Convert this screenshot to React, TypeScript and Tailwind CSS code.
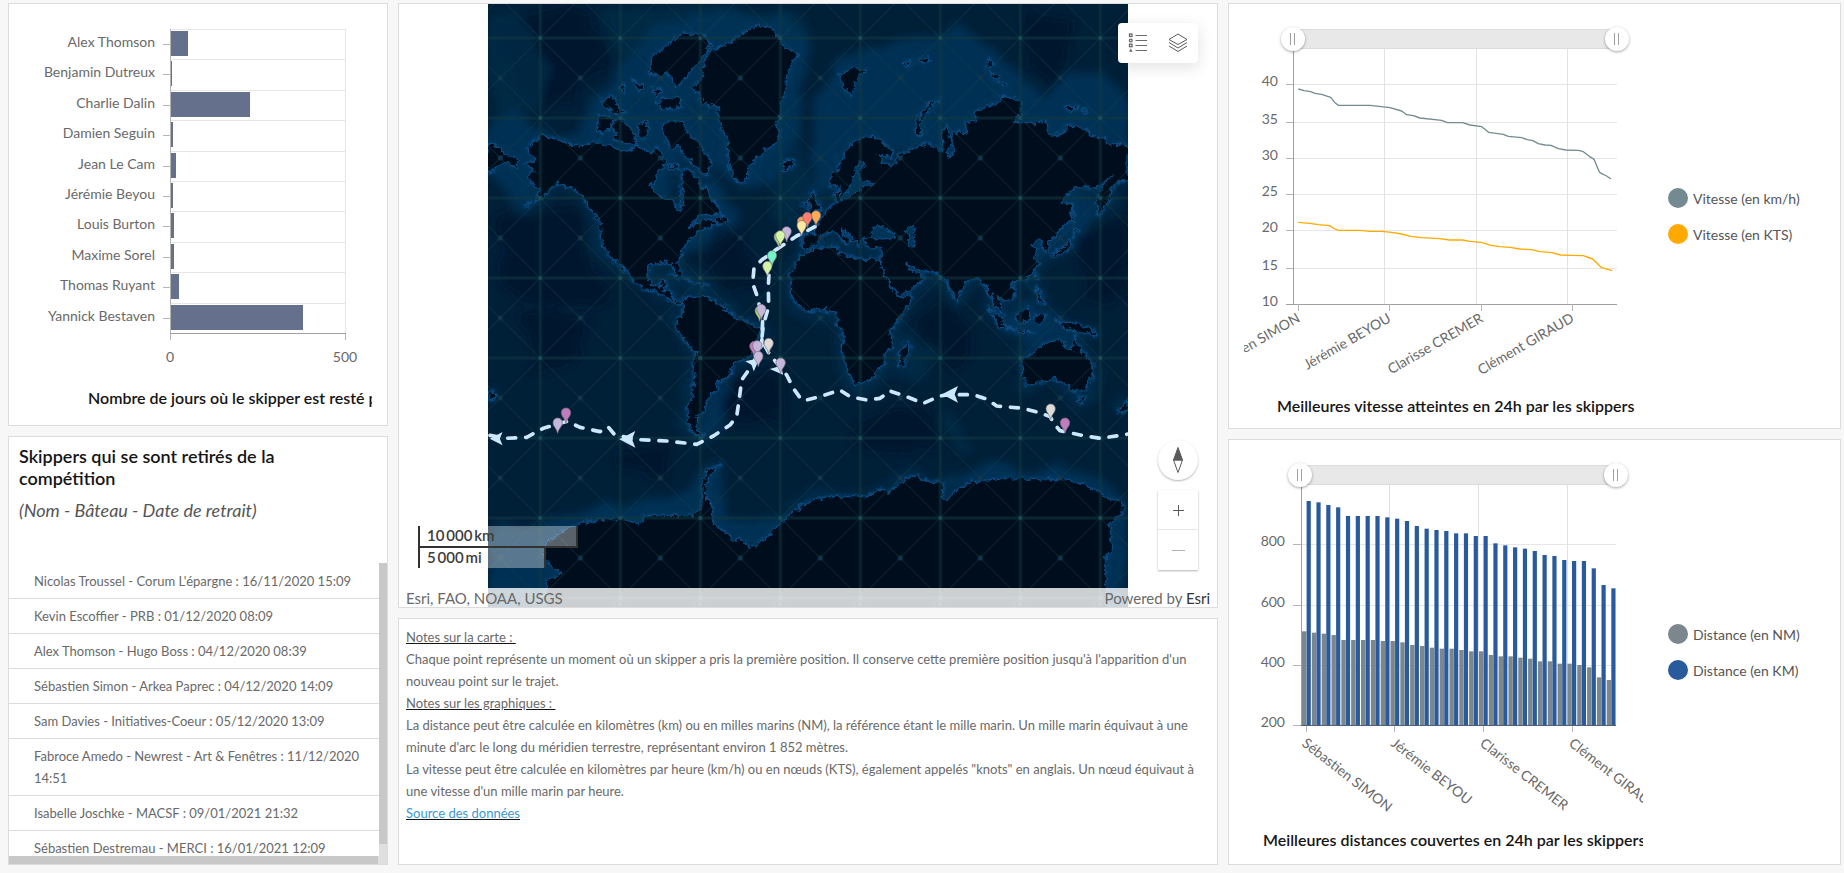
import { useId } from "react";
import type { ReactNode } from "react";

const LABEL = "fill-[#696969] text-[14px]";
const CHART_TITLE = "fill-[#151515] text-[16px] font-semibold";

/* ------------------------------------------------------------------ */
/* Days in the lead                                                    */
/* ------------------------------------------------------------------ */

const LEADERS = [
  { name: "Alex Thomson", width: 17 },
  { name: "Benjamin Dutreux", width: 1 },
  { name: "Charlie Dalin", width: 79 },
  { name: "Damien Seguin", width: 2 },
  { name: "Jean Le Cam", width: 5 },
  { name: "Jérémie Beyou", width: 2 },
  { name: "Louis Burton", width: 3 },
  { name: "Maxime Sorel", width: 3 },
  { name: "Thomas Ruyant", width: 8 },
  { name: "Yannick Bestaven", width: 132 },
];

function LeadersChart() {
  const rowTop = (i: number) => Math.round(29 + i * 30.4);
  return (
    <svg viewBox="9 4 378 421" className="h-full w-full" role="img" aria-label="Nombre de jours en tête">
      <clipPath id="leaders-clip">
        <rect x="24" y="4" width="348" height="421" />
      </clipPath>
      <g shapeRendering="crispEdges">
        {LEADERS.map((row, i) => (
          <g key={row.name}>
            <rect x="171" y={rowTop(i)} width="175" height="1" fill="#e6e6e6" />
            <rect x="163" y={rowTop(i) + 15} width="8" height="1" fill="#b5b5b5" />
          </g>
        ))}
        <rect x="345" y="29" width="1" height="304" fill="#e6e6e6" />
        <rect x="170" y="29" width="1" height="311" fill="#b5b5b5" />
        <rect x="345" y="333" width="1" height="7" fill="#b5b5b5" />
        <rect x="170" y="333" width="176" height="1" fill="#a0a0a0" />
        {LEADERS.map((row, i) => (
          <rect key={row.name} x="171" y={rowTop(i) + 2} width={row.width} height="25" fill="#64708c" />
        ))}
      </g>
      {LEADERS.map((row, i) => (
        <text key={row.name} x="155" y={rowTop(i) + 18} textAnchor="end" className={LABEL}>
          {row.name}
        </text>
      ))}
      <text x="170" y="362" textAnchor="middle" className={LABEL}>0</text>
      <text x="345" y="362" textAnchor="middle" className={LABEL}>500</text>
      <g clipPath="url(#leaders-clip)">
        <text x="88" y="404" className={CHART_TITLE}>
          Nombre de jours où le skipper est resté premier
        </text>
      </g>
    </svg>
  );
}

/* ------------------------------------------------------------------ */
/* Withdrawals list                                                    */
/* ------------------------------------------------------------------ */

const WITHDRAWALS = [
  "Nicolas Troussel - Corum L'épargne : 16/11/2020 15:09",
  "Kevin Escoffier - PRB : 01/12/2020 08:09",
  "Alex Thomson - Hugo Boss : 04/12/2020 08:39",
  "Sébastien Simon - Arkea Paprec : 04/12/2020 14:09",
  "Sam Davies - Initiatives-Coeur : 05/12/2020 13:09",
  "Fabroce Amedo - Newrest - Art & Fenêtres : 11/12/2020 14:51",
  "Isabelle Joschke - MACSF : 09/01/2021 21:32",
  "Sébastien Destremau - MERCI : 16/01/2021 12:09",
];

function Withdrawals() {
  return (
    <div className="flex h-full flex-col">
      <header className="h-[126px] shrink-0 px-[10px] pt-2">
        <h2 className="w-[300px] text-[18px] leading-[22px] font-semibold text-[#151515]">
          Skippers qui se sont retirés de la compétition
        </h2>
        <p className="mt-[10px] text-[18px] leading-[22px] text-[#555555] italic">
          (Nom - Bâteau - Date de retrait)
        </p>
      </header>
      <div className="flex min-h-0 grow">
        <ul className="grow overflow-hidden pt-px">
          {WITHDRAWALS.map((entry) => (
            <li
              key={entry}
              className="border-b border-[#dcdcdc] py-[6px] pr-[12px] pl-[25px] text-[13px] leading-[22px] text-[#696969]"
            >
              {entry}
            </li>
          ))}
        </ul>
        <div className="w-2 shrink-0 bg-[#dfdfdf]">
          <div className="h-[96%] bg-[#c8c8c8]" />
        </div>
      </div>
      <div className="h-2 shrink-0 bg-[#dfdfdf]">
        <div className="mr-[9px] h-full bg-[#c8c8c8]" />
      </div>
    </div>
  );
}

/* ------------------------------------------------------------------ */
/* World map                                                           */
/* ------------------------------------------------------------------ */

const LAND_WEST = [
  // Chukotka and Alaska / North America
  "24,425 45,432 62,448 90,468 118,482 105,502 90,490 70,485 55,492 45,505 24,520",
  "140,445 160,425 185,408 225,415 262,428 300,442 332,428 360,430 395,440 440,458 470,440 500,452 515,462 530,440 548,470 562,492 530,515 515,555 525,580 560,598 582,605 590,630 600,632 612,600 605,560 608,508 628,510 650,535 665,568 680,560 690,590 715,618 722,642 700,645 662,645 640,665 626,684 660,662 690,660 718,668 690,682 650,698 628,720 610,742 606,765 590,785 600,805 606,830 598,836 586,815 574,790 545,785 508,795 500,830 512,850 538,860 545,842 558,845 550,866 574,876 580,896 605,906 600,914 575,902 555,888 520,872 490,865 460,845 452,825 432,800 412,780 440,815 428,812 405,785 385,765 365,722 360,665 330,622 300,580 272,562 235,550 215,558 190,590 160,606 130,618 170,592 182,568 150,548 140,525 165,515 138,490 165,480 150,460",
  // Greenland
  "690,150 730,138 770,112 800,95 830,75 870,82 890,100 900,125 930,150 955,162 935,190 920,230 918,260 905,300 902,340 885,370 900,395 895,425 850,455 812,490 796,545 780,550 760,530 745,480 745,430 725,380 710,320 665,308 660,282 635,262 668,235 670,200",
  // Canadian Arctic
  "510,190 525,160 545,150 560,140 590,110 620,98 670,105 692,130 672,165 640,200 612,240 590,262 575,240 560,215 545,235 530,222 512,226",
  "528,308 560,330 600,322 604,300 590,292 550,296",
  "385,372 410,358 440,368 462,398 470,432 440,428 400,418 412,398",
  "355,350 380,346 402,368 368,402 352,388",
  "366,304 392,286 408,300 416,324 442,338 400,338 372,318",
  "545,375 575,362 610,368 622,400 655,430 690,478 684,528 668,520 640,492 612,468 602,440 572,442 550,402",
  "476,372 500,362 506,400 488,418 474,400",
  "458,238 492,262 476,276",
  "416,262 434,252 430,280",
  "512,262 545,270 530,292",
  "560,492 585,498 600,510 570,506",
  // Iceland, Newfoundland, Caribbean
  "905,490 925,482 940,478 946,494 916,513",
  "705,656 728,645 742,664 715,670",
  "572,822 605,826 636,845 606,838",
  "648,850 682,854 668,862",
  // South America
  "605,908 620,896 660,890 695,898 715,912 745,925 730,930 770,955 820,975 840,990 836,1010 820,1035 818,1058 800,1076 766,1088 745,1130 712,1150 716,1165 696,1176 676,1208 668,1240 654,1246 650,1285 672,1308 648,1306 626,1280 622,1230 636,1190 640,1150 646,1055 618,1026 590,980 592,958 605,945 612,918",
];

const LAND_EAST = [
  // Africa
  "990,752 1022,742 1068,738 1074,760 1110,768 1150,780 1180,774 1198,784 1214,826 1232,862 1254,892 1290,884 1294,902 1260,950 1230,998 1240,1040 1212,1064 1210,1092 1172,1140 1126,1152 1106,1118 1086,1050 1090,1000 1070,962 1070,940 1030,928 985,936 960,920 935,888 932,822 960,772",
  "1284,1024 1290,1045 1276,1090 1256,1096 1256,1058",
  // Eurasia
  "967,702 1004,700 1002,686 1020,662 1045,626 1070,606 1064,580 1080,562 1084,596 1070,560 1050,562 1054,530 1080,498 1100,450 1124,425 1164,408 1200,420 1236,452 1234,474 1194,464 1208,490 1236,500 1260,465 1310,440 1345,430 1386,452 1384,396 1400,376 1412,420 1402,474 1424,458 1414,400 1440,396 1462,405 1454,370 1490,360 1484,340 1520,318 1560,310 1565,285 1590,290 1622,304 1622,340 1600,366 1675,370 1695,360 1710,405 1750,400 1760,375 1810,385 1840,410 1870,414 1880,430 1944,436 1944,540 1920,545 1890,568 1886,600 1854,652 1852,594 1868,560 1894,530 1850,564 1785,560 1745,604 1776,614 1770,660 1730,700 1706,728 1708,758 1692,752 1680,720 1652,732 1672,750 1664,772 1676,792 1658,818 1640,836 1612,842 1592,850 1602,870 1598,896 1574,906 1555,884 1560,920 1570,943 1550,930 1538,900 1520,866 1496,832 1462,846 1442,874 1430,908 1408,858 1392,836 1374,818 1320,812 1284,790 1288,812 1316,818 1334,834 1294,868 1256,886 1224,842 1202,798 1200,774 1208,746 1176,742 1158,736 1152,718 1170,710 1142,716 1138,740 1120,718 1086,684 1084,694 1110,720 1100,734 1078,708 1062,692 1032,702 1014,728 986,746 966,740",
  // British Isles
  "986,600 1000,572 1010,600 1025,630 990,640",
  "970,612 985,604 982,626",
  // Arctic islands
  "1385,295 1345,312 1318,348 1305,390 1312,406 1326,400 1322,362 1352,322",
  "1078,226 1110,205 1160,208 1130,240 1112,292 1094,262",
  "1528,172 1542,196 1518,200",
  "1524,212 1556,226 1550,244",
  "1558,240 1582,256 1568,262",
  "1270,190 1292,184 1288,200",
  "1320,176 1344,170 1350,184 1330,194",
  "1754,318 1796,320 1774,336",
  "1806,328 1824,334 1812,337",
  // Japan, Sakhalin, Taiwan, Philippines
  "1779,684 1796,694 1776,704",
  "1780,708 1774,744 1722,768 1712,762 1750,742",
  "1779,612 1786,668 1778,664",
  "1664,820 1672,836 1664,840",
  "1668,858 1680,880 1692,912 1676,906",
  // Indonesia and New Guinea
  "1522,922 1560,950 1584,990 1560,980",
  "1606,950 1644,920 1652,960 1612,968",
  "1582,984 1640,992 1664,998 1620,998",
  "1664,946 1700,942 1680,976 1666,968",
  "1728,960 1792,974 1830,986 1852,1006 1792,996 1750,982",
  // Australia, Tasmania, New Zealand
  "1625,1080 1660,1060 1695,1030 1735,1020 1760,1045 1776,1050 1786,1004 1800,1045 1840,1095 1836,1130 1816,1172 1780,1174 1760,1150 1720,1135 1670,1150 1640,1156 1628,1116",
  "1795,1190 1813,1190 1805,1212",
  "1944,1200 1914,1232 1930,1236 1944,1222",
  "24,1180 44,1172 50,1190 30,1200",
];

const ANTARCTICA =
  "195,1830 200,1740 245,1720 210,1695 190,1660 200,1630 240,1600 290,1572 370,1560 420,1555 480,1572 492,1548 580,1545 640,1548 665,1520 666,1460 680,1415 720,1390 682,1440 676,1480 696,1520 700,1570 760,1620 790,1620 806,1640 830,1640 890,1580 960,1520 990,1502 1050,1490 1160,1490 1200,1468 1225,1480 1260,1450 1305,1425 1340,1445 1390,1450 1386,1490 1400,1505 1430,1470 1480,1445 1560,1435 1660,1438 1750,1435 1810,1455 1880,1490 1930,1512 1925,1540 1890,1570 1894,1650 1876,1670 1882,1830";

const INLAND_WATER = [
  "1170,700 1176,682 1206,680 1245,704 1240,716 1172,716",
  "1280,682 1306,674 1298,700 1306,740 1290,742 1286,712",
  "1140,486 1156,490 1136,516 1142,542 1186,550 1140,566 1110,592 1078,606 1110,560 1126,512",
  "600,620 604,560 612,560 610,620",
];

const SHELF = [
  "24,360 100,330 180,400 300,400 340,330 400,240 460,130 560,60 680,50 760,30 900,40 980,130 960,330 900,520 800,560 700,480 600,460 540,620 500,560 380,480 180,480 160,600 90,610 24,520",
  "1000,300 1080,180 1240,120 1420,90 1560,130 1620,240 1700,290 1780,220 1880,220 1944,300 1944,440 1600,400 1400,480 1180,430 1060,520 1000,600",
  "560,620 620,760 720,680 760,700 780,640 700,560",
  "1560,860 1700,760 1800,700 1880,600 1740,560 1640,800",
  "1540,960 1640,900 1780,1020 1700,1060 1560,990",
  "660,1310 700,1180 760,1130 720,1290",
  "24,1570 110,1600 330,1520 600,1480 720,1380 760,1560 900,1560 840,1660 700,1620 240,1620 220,1830 24,1830",
  "1380,1440 1500,1400 1800,1410 1944,1500 1944,1830 1860,1830 1860,1500 1500,1460",
];

const RIDGES = [
  "24,30 120,40 220,200 180,330 40,340",
  "360,20 900,20 980,60 960,160 400,160",
  "860,520 960,420 1000,560 940,700 880,640",
  "1260,1130 1330,1020 1360,1060 1320,1140",
  "1380,1240 1420,1230 1470,1340 1440,1380",
];

const BASINS = [
  "60,60 300,20 380,200 200,330 90,260",
  "60,640 300,640 380,900 200,940 60,860",
  "660,760 800,700 860,880 740,860",
  "1620,40 1780,40 1740,270 1640,210",
  "1780,720 1944,640 1944,900 1820,900",
  "720,1150 900,1120 920,1260 740,1260",
  "1120,1260 1340,1220 1360,1340 1130,1350",
  "420,1340 560,1330 580,1420 420,1420",
  "1320,980 1420,900 1500,1040 1420,1130",
  "140,940 320,960 280,1080 150,1140",
];

const ROUTE_OUT =
  "M1005,680 L950,708 L890,748 L868,800 L865,860 L866,920 L850,975 L845,1020 L870,1065 L900,1100 L920,1125 L940,1165 L965,1200 L980,1200 L1020,1190 L1080,1170 L1110,1190 L1160,1200 L1200,1195 L1230,1173 L1280,1190 L1330,1210 L1380,1188 L1410,1184 L1480,1184 L1520,1197 L1550,1218 L1630,1225 L1685,1240 L1710,1250 L1725,1275 L1740,1292 L1810,1307 L1860,1315 L1930,1305 L1944,1302";
const ROUTE_BACK =
  "M30,1306 L80,1315 L140,1312 L190,1285 L240,1270 L262,1264 L300,1282 L360,1295 L384,1280 L402,1302 L460,1318 L560,1323 L650,1333 L700,1308 L750,1275 L770,1250 L780,1180 L785,1140 L820,1090 L845,1035 L848,960 L832,890 L818,850 L822,804 L845,780 L890,748";

const ARROWS = [
  { x: 444, y: 1318, angle: 0, size: 1 },
  { x: 1412, y: 1183, angle: 0, size: 1 },
  { x: 50, y: 1316, angle: 0, size: 0.8 },
  { x: 822, y: 1088, angle: 140, size: 0.8 },
  { x: 896, y: 1108, angle: 230, size: 0.8 },
];

const PINS = [
  { x: 1008, y: 650, fill: "#ffaa55" },
  { x: 966, y: 668, fill: "#f0a060" },
  { x: 982, y: 655, fill: "#ff7d6e" },
  { x: 965, y: 680, fill: "#ffe9a0" },
  { x: 920, y: 698, fill: "#c5b7dc" },
  { x: 896, y: 714, fill: "#a8d08a" },
  { x: 901, y: 710, fill: "#d3f7a8" },
  { x: 876, y: 770, fill: "#74f2c8" },
  { x: 862, y: 802, fill: "#d3f7a8" },
  { x: 839, y: 936, fill: "#b6d36b" },
  { x: 844, y: 931, fill: "#c5b7dc" },
  { x: 823, y: 1042, fill: "#c07cbf" },
  { x: 832, y: 1040, fill: "#c5b7dc" },
  { x: 835, y: 1072, fill: "#c9b9df" },
  { x: 866, y: 1033, fill: "#dedbd8" },
  { x: 902, y: 1092, fill: "#c5b7dc" },
  { x: 258, y: 1242, fill: "#c07cbf" },
  { x: 233, y: 1272, fill: "#c5b7dc" },
  { x: 1712, y: 1230, fill: "#dedbd8" },
  { x: 1755, y: 1272, fill: "#c07cbf" },
];

function WorldMap() {
  const land = [...LAND_WEST, ...LAND_EAST, ANTARCTICA];
  return (
    <svg viewBox="24 12 1920 1809" className="h-full w-auto" role="img" aria-label="Carte du parcours">
      <defs>
        <filter id="coast" x="-5%" y="-5%" width="110%" height="110%">
          <feTurbulence type="fractalNoise" baseFrequency="0.06" numOctaves="3" seed="4" result="noise" />
          <feDisplacementMap in="SourceGraphic" in2="noise" scale="24" xChannelSelector="R" yChannelSelector="G" />
        </filter>
        <filter id="haze" x="-10%" y="-10%" width="120%" height="120%">
          <feTurbulence type="fractalNoise" baseFrequency="0.01" numOctaves="5" seed="9" result="noise" />
          <feDisplacementMap in="SourceGraphic" in2="noise" scale="80" xChannelSelector="R" yChannelSelector="G" result="bent" />
          <feGaussianBlur in="bent" stdDeviation="12" />
        </filter>
        <pattern id="graticule" x="60" y="114" width="240" height="240" patternUnits="userSpaceOnUse" patternTransform="translate(121 0)">
          <path d="M0,0 L240,240 M240,0 L0,240" stroke="#174048" strokeWidth="3" opacity="0.6" />
          <path d="M0,0 H240 M0,240 H240 M0,0 V240 M240,0 V240" stroke="#123740" strokeWidth="9" opacity="0.55" />
          <rect x="113" y="113" width="14" height="14" fill="#12364a" />
          <path d="M-5,0 H5 M235,0 H245 M-5,240 H5 M235,240 H245" stroke="#1c4f5c" strokeWidth="10" />
        </pattern>
        <clipPath id="map-clip">
          <rect x="24" y="12" width="1920" height="1809" />
        </clipPath>
      </defs>
      <g clipPath="url(#map-clip)">
        <rect x="24" y="12" width="1920" height="1809" fill="#002038" />
        <g filter="url(#haze)">
          {BASINS.map((points) => (
            <polygon key={points} points={points} fill="#00192e" />
          ))}
          {RIDGES.map((points) => (
            <polygon key={points} points={points} fill="#042b48" opacity="0.8" />
          ))}
          <g fill="none" stroke="#04294a" strokeWidth="36" strokeLinejoin="round">
            {land.map((points) => (
              <polygon key={points} points={points} />
            ))}
          </g>
          {SHELF.map((points) => (
            <polygon key={points} points={points} fill="#05345a" opacity="0.8" />
          ))}
        </g>
        <g filter="url(#coast)" strokeLinejoin="round">
          {land.map((points) => (
            <polygon key={points} points={points} fill="none" stroke="#05365d" strokeWidth="14" />
          ))}
          {land.map((points) => (
            <polygon key={points} points={points} fill="#000f1f" stroke="#0a4a7f" strokeWidth="4" />
          ))}
          {INLAND_WATER.map((points) => (
            <polygon key={points} points={points} fill="#053558" stroke="#0a4a7f" strokeWidth="4" />
          ))}
        </g>
        <rect x="24" y="12" width="1920" height="1809" fill="url(#graticule)" />
        <g
          fill="none"
          stroke="#cde8fd"
          strokeWidth="11"
          strokeLinecap="round"
          strokeLinejoin="round"
          strokeDasharray="24 30"
        >
          <path d={ROUTE_OUT} />
          <path d={ROUTE_BACK} />
        </g>
        {ARROWS.map((a) => (
          <path
            key={`${a.x}-${a.y}`}
            d="M-26,0 L22,-25 L12,0 L22,25 Z"
            fill="#cde8fd"
            transform={`translate(${a.x} ${a.y}) rotate(${a.angle}) scale(${a.size})`}
          />
        ))}
        {PINS.map((p) => (
          <path
            key={`${p.x}-${p.y}`}
            d="M0,28 C-3,12 -14,8 -14,-4 A14,14 0 1 1 14,-4 C14,8 3,12 0,28 Z"
            fill={p.fill}
            stroke="#7a6f74"
            strokeWidth="2"
            transform={`translate(${p.x} ${p.y})`}
          />
        ))}
      </g>
    </svg>
  );
}

function LegendIcon() {
  return (
    <svg width="20" height="20" viewBox="0 0 20 20" fill="none" stroke="#6a6a6a" aria-hidden="true">
      <path d="M7.500 2.500H19M7.500 7.500H19M7.500 12.500H19M7.500 17.500H19" />
      <rect x="1.500" y="1" width="2.500" height="2.500" strokeWidth="1.300" />
      <circle cx="2.800" cy="7.500" r="1.400" strokeWidth="1.300" />
      <rect x="1.500" y="11.200" width="2.500" height="2.500" strokeWidth="1.300" />
      <path d="M2.800 15.500L4.600 18.800H1Z" fill="#6a6a6a" stroke="none" />
    </svg>
  );
}

function LayersIcon() {
  return (
    <svg width="20" height="20" viewBox="0 0 20 20" fill="none" stroke="#5a5a5a" strokeLinejoin="round" aria-hidden="true">
      <path d="M10 1L19 6.500L10 11.500L1 6.500Z" />
      <path d="M1 9.500L10 15L19 9.500" />
      <path d="M1 13L10 18.500L19 13" />
    </svg>
  );
}

function MapPanel() {
  return (
    <div className="relative flex h-full justify-center overflow-hidden">
      <WorldMap />
      <div className="absolute top-[19px] right-[19px] flex rounded bg-white shadow-[0_4px_16px_rgba(0,0,0,0.12)]">
        <button type="button" aria-label="Légende" className="flex size-10 items-center justify-center">
          <LegendIcon />
        </button>
        <button type="button" aria-label="Couches" className="flex size-10 items-center justify-center">
          <LayersIcon />
        </button>
      </div>
      <div className="absolute right-[19px] bottom-[37px] flex flex-col gap-[10px]">
        <button
          type="button"
          aria-label="Orientation"
          className="flex size-10 items-center justify-center rounded-full bg-white shadow-[0_1px_2px_rgba(0,0,0,0.3)]"
        >
          <svg width="12" height="28" viewBox="0 0 12 28" stroke="#5a5a5a" aria-hidden="true">
            <path d="M6 1.500L10.500 14H1.500Z" fill="#5a5a5a" />
            <path d="M1.500 14L6 26.500L10.500 14Z" fill="none" />
          </svg>
        </button>
        <div className="flex w-10 flex-col bg-white shadow-[0_1px_2px_rgba(0,0,0,0.3)]">
          <button type="button" aria-label="Zoom avant" className="flex h-10 items-center justify-center border-b border-[#e6e6e6]">
            <svg width="12" height="12" viewBox="0 0 12 12" stroke="#5a5a5a" aria-hidden="true">
              <path d="M6.500 1V12M1 6.500H12" />
            </svg>
          </button>
          <button type="button" aria-label="Zoom arrière" className="flex h-10 items-center justify-center">
            <svg width="13" height="12" viewBox="0 0 13 12" stroke="#b0b0b0" aria-hidden="true">
              <path d="M0 6.500H13" />
            </svg>
          </button>
        </div>
      </div>
      <div className="absolute bottom-[39px] left-[19px] text-[15px] leading-[18px] font-semibold text-[#3c3c3c]">
        <div className="h-[22px] w-[160px] border-x-2 border-b-2 border-[#323232] bg-white/35 pl-[7px]">
          10&#8201;000&#8201;km
        </div>
        <div className="h-[20px] w-[128px] border-x-2 border-[#323232] bg-white/35 pl-[7px]">
          5&#8201;000&#8201;mi
        </div>
      </div>
      <div className="absolute inset-x-0 bottom-0 flex h-[19px] items-center justify-between bg-white/80 px-[7px] text-[15px] leading-[16px] text-[#696969]">
        <span>Esri, FAO, NOAA, USGS</span>
        <span>
          Powered by <a href="#esri" className="text-[#323232]">Esri</a>
        </span>
      </div>
    </div>
  );
}

/* ------------------------------------------------------------------ */
/* Notes                                                               */
/* ------------------------------------------------------------------ */

function Notes() {
  return (
    <div className="pt-[7px] pr-1 pl-[7px] text-[13px] leading-[22px] text-[#696969]">
      <p className="underline decoration-[#151515]">Notes sur la carte :&nbsp;</p>
      <p>
        Chaque point représente un moment où un skipper a pris la première position. Il conserve cette première
        position jusqu'à l'apparition d'un nouveau point sur le trajet.
      </p>
      <p className="underline decoration-[#151515]">Notes sur les graphiques :&nbsp;</p>
      <p>
        La distance peut être calculée en kilomètres (km) ou en milles marins (NM), la référence étant le mille marin.
        Un mille marin équivaut à une minute d'arc le long du méridien terrestre, représentant environ 1 852 mètres.
      </p>
      <p>
        La vitesse peut être calculée en kilomètres par heure (km/h) ou en nœuds (KTS), également appelés "knots" en
        anglais. Un nœud équivaut à une vitesse d'un mille marin par heure.
      </p>
      <p>
        <a href="#source" className="text-[#3a97d3] underline decoration-[#151515]">
          Source des données
        </a>
      </p>
    </div>
  );
}

/* ------------------------------------------------------------------ */
/* 24 h records                                                        */
/* ------------------------------------------------------------------ */

const THUMB =
  "pointer-events-none col-start-1 row-start-1 h-6 w-full appearance-none bg-transparent [&::-webkit-slider-thumb]:pointer-events-auto [&::-webkit-slider-thumb]:size-6 [&::-webkit-slider-thumb]:appearance-none [&::-webkit-slider-thumb]:rounded-full [&::-webkit-slider-thumb]:bg-white [&::-webkit-slider-thumb]:bg-[linear-gradient(90deg,transparent_9px,#a0a0a0_9px,#a0a0a0_10px,transparent_10px,transparent_13px,#a0a0a0_13px,#a0a0a0_14px,transparent_14px)] [&::-webkit-slider-thumb]:bg-[length:24px_12px] [&::-webkit-slider-thumb]:bg-center [&::-webkit-slider-thumb]:bg-no-repeat [&::-webkit-slider-thumb]:shadow-[0_1px_3px_rgba(0,0,0,0.35)]";

function RangeSlider({ label, className }: { label: string; className: string }) {
  return (
    <div className={`absolute top-[23px] grid items-center ${className}`}>
      <div className="col-start-1 row-start-1 mx-3 h-5 border-y border-[#dcdcdc] bg-[#e8e8e8]" />
      <input type="range" aria-label={`${label} : début`} defaultValue={0} className={THUMB} />
      <input type="range" aria-label={`${label} : fin`} defaultValue={100} className={THUMB} />
    </div>
  );
}

function Legend({ items }: { items: { label: string; dot: string }[] }) {
  return (
    <ul className="ml-[25px] flex grow flex-col justify-center gap-4">
      {items.map((item) => (
        <li key={item.label} className="flex h-5 items-center gap-[5px] text-[14px] text-[#555555]">
          <span className={`size-5 rounded-full ${item.dot}`} />
          {item.label}
        </li>
      ))}
    </ul>
  );
}

const SPEED_KMH =
  "235,267 252,272 272,275 285,280 305,283 332,292 345,308 355,316 450,316 510,323 545,333 560,344 580,347 600,354 665,361 682,368 728,368 750,375 785,380 806,397 850,403 865,409 905,413 922,419 938,422 955,431 975,435 993,436 1015,446 1038,450 1075,451 1090,455 1108,469 1122,478 1138,516 1145,521 1160,528 1173,537";
const SPEED_KTS =
  "235,667 270,670 295,674 328,677 345,687 355,691 420,691 450,694 485,694 515,697 545,702 572,709 605,713 660,716 688,720 728,720 750,724 785,727 812,736 840,740 870,742 900,747 935,749 960,755 995,758 1022,765 1055,766 1090,767 1118,777 1145,803 1177,812";

const SPEED_TICKS = [
  { label: "40", y: 84 },
  { label: "35", y: 122 },
  { label: "30", y: 158 },
  { label: "25", y: 194 },
  { label: "20", y: 230 },
  { label: "15", y: 268 },
  { label: "10", y: 304 },
];

const SAILORS = ["Sébastien SIMON", "Jérémie BEYOU", "Clarisse CREMER", "Clément GIRAUD"];

function PlotFrame({ viewBox, label, children, slider }: { viewBox: string; label: string; children: ReactNode; slider: string }) {
  const id = useId();
  return (
    <div className="relative ml-[15px] w-[399px] shrink-0">
      <svg viewBox={viewBox} className="h-full w-full overflow-hidden" role="img" aria-labelledby={id}>
        <title id={id}>{label}</title>
        {children}
      </svg>
      <RangeSlider label={label} className={slider} />
    </div>
  );
}

function SpeedChart() {
  return (
    <div className="flex h-full">
      <PlotFrame viewBox="1244 4 399 424" label="Vitesses" slider="left-[37px] w-[348px]">
        <g shapeRendering="crispEdges">
          {SPEED_TICKS.map((t) => (
            <g key={t.label}>
              <rect x="1294" y={t.y} width="323" height="1" fill="#e6e6e6" />
              <rect x="1286" y={t.y} width="8" height="1" fill="#b5b5b5" />
            </g>
          ))}
          {[1384, 1476, 1567].map((x) => (
            <rect key={x} x={x} y="40" width="1" height="264" fill="#e2e2e2" />
          ))}
          <rect x="1293" y="40" width="1" height="264" fill="#a0a0a0" />
          <rect x="1286" y="304" width="331" height="1" fill="#a0a0a0" />
          {[1298, 1389, 1481, 1572].map((x) => (
            <rect key={x} x={x} y="304" width="1" height="7" fill="#b5b5b5" />
          ))}
        </g>
        {SPEED_TICKS.map((t) => (
          <text key={t.label} x="1278" y={t.y + 2} textAnchor="end" className={LABEL}>
            {t.label}
          </text>
        ))}
        <g transform="translate(1220 0) scale(0.33333)" fill="none" strokeWidth="4" strokeLinejoin="round">
          <polyline points={SPEED_KMH} stroke="#738b90" />
          <polyline points={SPEED_KTS} stroke="#ffaa00" />
        </g>
        {SAILORS.map((name, i) => (
          <text
            key={name}
            textAnchor="end"
            transform={`translate(${1301 + Math.round(i * 91.3)} 321) rotate(-30)`}
            className={LABEL}
          >
            {name}
          </text>
        ))}
        <text x="1277" y="412" className={CHART_TITLE}>
          Meilleures vitesse atteintes en 24h par les skippers
        </text>
      </PlotFrame>
      <Legend
        items={[
          { label: "Vitesse (en km/h)", dot: "bg-[#738b90]" },
          { label: "Vitesse (en KTS)", dot: "bg-[#ffaa00]" },
        ]}
      />
    </div>
  );
}

const KM_TOPS = [
  213, 217, 225, 232, 258, 258, 258, 258, 262, 266, 273, 288, 296, 300, 303, 310, 310, 318, 318, 340, 346, 352, 356,
  363, 375, 378, 390, 393, 393, 415, 465, 475,
];
const NM_TOPS = [
  604, 608, 611, 615, 630, 630, 630, 630, 633, 633, 637, 645, 648, 653, 656, 656, 660, 664, 664, 675, 679, 679, 683,
  686, 694, 694, 701, 701, 705, 712, 742, 750,
];

const DISTANCE_TICKS = [
  { label: "800", y: 544 },
  { label: "600", y: 605 },
  { label: "400", y: 665 },
  { label: "200", y: 725 },
];

function DistanceChart() {
  const top = (v: number) => 430 + v / 3;
  return (
    <div className="flex h-full">
      <PlotFrame viewBox="1244 440 399 424" label="Distances" slider="left-[44px] w-[340px]">
        <g shapeRendering="crispEdges">
          {DISTANCE_TICKS.map((t) => (
            <g key={t.label}>
              <rect x="1301" y={t.y} width="315" height="1" fill="#e6e6e6" />
              <rect x="1293" y={t.y} width="8" height="1" fill="#b5b5b5" />
            </g>
          ))}
          {[1389, 1478, 1567].map((x) => (
            <rect key={x} x={x} y="476" width="1" height="250" fill="#e2e2e2" />
          ))}
          {[1306, 1394, 1483, 1572].map((x) => (
            <rect key={x} x={x} y="726" width="1" height="6" fill="#b5b5b5" />
          ))}
        </g>
        {KM_TOPS.map((km, i) => (
          <g key={i}>
            <rect x={1302 + i * 9.83} y={top(NM_TOPS[i])} width="4.400" height={726 - top(NM_TOPS[i])} fill="#7b878c" />
            <rect x={1306.6 + i * 9.83} y={top(km)} width="4.200" height={726 - top(km)} fill="#285a9c" />
          </g>
        ))}
        <rect x="1301" y="476" width="1" height="250" fill="#a0a0a0" />
        <rect x="1301" y="725" width="315" height="1" fill="#4d6078" />
        {DISTANCE_TICKS.map((t) => (
          <text key={t.label} x="1285" y={t.y + 2} textAnchor="end" className={LABEL}>
            {t.label}
          </text>
        ))}
        {SAILORS.map((name, i) => (
          <text key={name} transform={`translate(${1301 + i * 89} 745) rotate(38)`} className={LABEL}>
            {name}
          </text>
        ))}
        <text x="1263" y="846" className={CHART_TITLE}>
          Meilleures distances couvertes en 24h par les skippers
        </text>
      </PlotFrame>
      <Legend
        items={[
          { label: "Distance (en NM)", dot: "bg-[#7b878c]" },
          { label: "Distance (en KM)", dot: "bg-[#285a9c]" },
        ]}
      />
    </div>
  );
}

/* ------------------------------------------------------------------ */
/* Page                                                                */
/* ------------------------------------------------------------------ */

function Card({ children }: { children: ReactNode }) {
  return <section className="min-h-0 overflow-hidden border border-[#dcdcdc] bg-white">{children}</section>;
}

export default function App() {
  return (
    <main className="grid h-screen grid-cols-[380fr_820fr_613fr] gap-[10px] bg-[#f7f7f7] pt-[3px] pr-[3px] pb-2 pl-2 font-['Lato',sans-serif]">
      <div className="grid min-h-0 min-w-0 grid-rows-[423fr_429fr] gap-[10px]">
        <Card><LeadersChart /></Card>
        <Card><Withdrawals /></Card>
      </div>
      <div className="grid min-h-0 min-w-0 grid-rows-[605fr_247fr] gap-[10px]">
        <Card><MapPanel /></Card>
        <Card><Notes /></Card>
      </div>
      <div className="grid min-h-0 min-w-0 grid-rows-2 gap-[10px]">
        <Card><SpeedChart /></Card>
        <Card><DistanceChart /></Card>
      </div>
    </main>
  );
}
